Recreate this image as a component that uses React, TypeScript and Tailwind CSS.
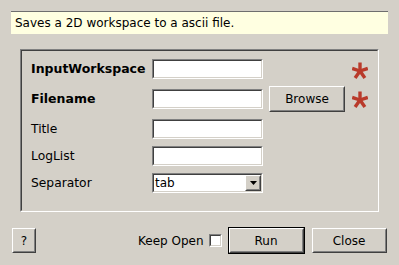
import React from 'react';

const font = { fontFamily: '"DejaVu Sans", Verdana, sans-serif' };

// classic sunken field frame
const Sunken = ({ className = '', children }: { className?: string; children?: React.ReactNode }) => (
  <div className={`border border-t-[#808080] border-l-[#808080] border-b-white border-r-white ${className}`}>
    <div className="h-full w-full border border-t-[#404040] border-l-[#404040] border-b-[#d4d0c8] border-r-[#d4d0c8] bg-white">
      {children}
    </div>
  </div>
);

const Raised = ({ className = '', children }: { className?: string; children?: React.ReactNode }) => (
  <div className={`border border-t-white border-l-white border-b-[#404040] border-r-[#404040] ${className}`}>
    <div className="flex h-full w-full items-center justify-center border border-t-[#d4d0c8] border-l-[#d4d0c8] border-b-[#808080] border-r-[#808080] bg-[#d4d0c8]">
      {children}
    </div>
  </div>
);

const Star = () => (
  <svg width="16" height="17" viewBox="0 0 16 17" className="shrink-0">
    <g stroke="#b93a2b" strokeWidth="3.4" strokeLinecap="butt">
      <line x1="8" y1="9" x2="8" y2="0.5" />
      <line x1="8" y1="9" x2="15.8" y2="6.4" />
      <line x1="8" y1="9" x2="12.9" y2="16" />
      <line x1="8" y1="9" x2="3.1" y2="16" />
      <line x1="8" y1="9" x2="0.2" y2="6.4" />
    </g>
  </svg>
);

const Row = ({ label, bold, children, tall }: { label: string; bold?: boolean; children?: React.ReactNode; tall?: boolean }) => (
  <div className={`flex items-center ${tall ? 'h-[26px]' : 'h-[20px]'}`}>
    <div className={`w-[121px] text-black ${bold ? 'text-[12.5px] font-bold' : 'text-[12.3px]'}`}>{label}</div>
    {children}
  </div>
);

export default function App() {
  return (
    <div style={font} className="flex h-[265px] w-[399px] flex-col bg-[#d4d0c8] text-[12px] text-black">
      <div className="ml-[11px] mt-[11px] flex h-[23px] w-[377px] items-center border-t border-t-[#6e6e6e] bg-[#ffffe1] pl-[4px]">
        Saves a 2D workspace to a ascii file.
      </div>

      <div className="ml-[20px] mt-[15px] h-[163px] w-[359px] border border-t-[#808080] border-l-[#808080] border-b-white border-r-white">
        <div className="flex h-full w-full flex-col gap-[7px] border border-t-[#404040] border-l-[#404040] border-b-[#d4d0c8] border-r-[#d4d0c8] pl-[9px] pt-[8px]">
          <Row label="InputWorkspace" bold>
            <Sunken className="h-[20px] w-[111px]" />
            <div className="ml-[89px] mt-[3px]">
              <Star />
            </div>
          </Row>
          <Row label="Filename" bold tall>
            <Sunken className="h-[20px] w-[111px]" />
            <Raised className="ml-[6px] h-[26px] w-[76px]">Browse</Raised>
            <div className="ml-[7px] mt-[1px]">
              <Star />
            </div>
          </Row>
          <Row label="Title">
            <Sunken className="h-[20px] w-[111px]" />
          </Row>
          <Row label="LogList">
            <Sunken className="h-[20px] w-[111px]" />
          </Row>
          <Row label="Separator">
            <Sunken className="h-[20px] w-[111px]">
              <div className="flex h-full items-center">
                <span className="flex-1 pl-[1px]">tab</span>
                <Raised className="h-[16px] w-[16px]">
                  <svg width="7" height="4" viewBox="0 0 7 4">
                    <path d="M0 0h7L3.5 4z" fill="#000" />
                  </svg>
                </Raised>
              </div>
            </Sunken>
          </Row>
        </div>
      </div>

      <div className="mt-[15px] flex items-center pl-[12px]">
        <Raised className="h-[25px] w-[24px]">?</Raised>
        <span className="ml-[102px]">Keep Open</span>
        <div className="ml-[5px]">
          <Sunken className="h-[13px] w-[13px]" />
        </div>
        <div className="ml-[6px] border border-black">
          <Raised className="h-[25px] w-[75px]">Run</Raised>
        </div>
        <Raised className="ml-[7px] h-[25px] w-[75px]">Close</Raised>
      </div>
    </div>
  );
}
